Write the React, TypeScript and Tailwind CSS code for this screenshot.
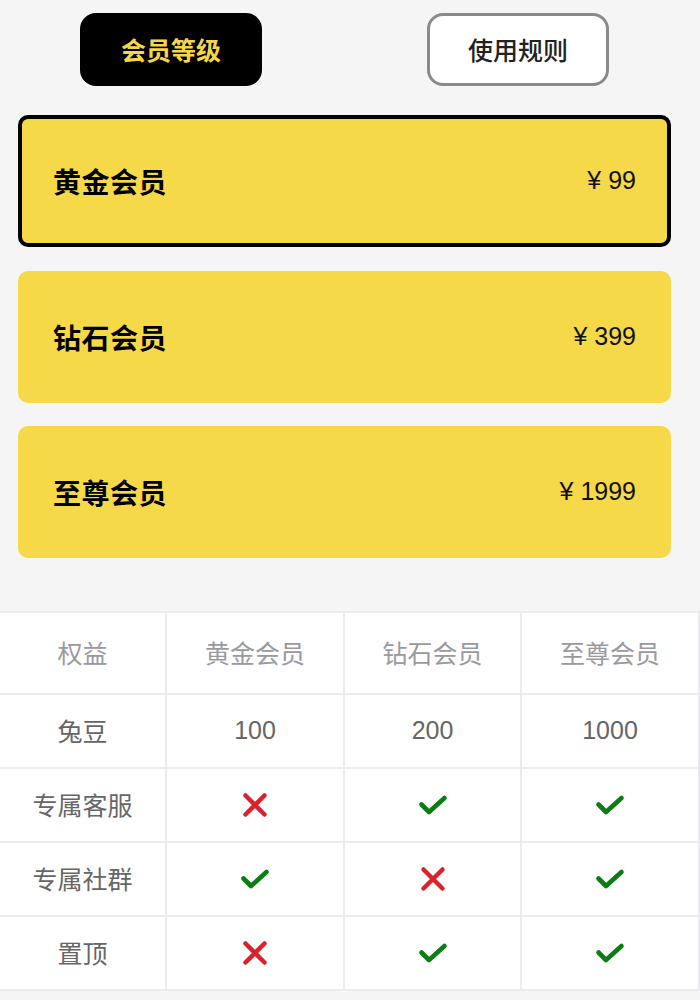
import React from "react";

const font = { fontFamily: '"Noto Sans CJK SC", "Noto Sans", sans-serif' };
const numFont = { fontFamily: '"Liberation Sans", "Noto Sans CJK SC", sans-serif' };

function Cross() {
  return (
    <svg width="26" height="26" viewBox="0 0 26 26">
      <path d="M3.5 3.5 L22.5 22.5 M22.5 3.5 L3.5 22.5" stroke="#d9232b" strokeWidth="4.5" strokeLinecap="round" fill="none" />
    </svg>
  );
}

function Check() {
  return (
    <svg width="30" height="24" viewBox="0 0 30 24">
      <path d="M3.5 11.5 L11 19 L26.5 5" stroke="#0b7d12" strokeWidth="4.6" strokeLinecap="round" strokeLinejoin="round" fill="none" />
    </svg>
  );
}

type Cell = string | boolean;

const rows: { name: string; vals: Cell[] }[] = [
  { name: "兔豆", vals: ["100", "200", "1000"] },
  { name: "专属客服", vals: [false, true, true] },
  { name: "专属社群", vals: [true, false, true] },
  { name: "置顶", vals: [false, true, true] },
];

const cards = [
  { name: "黄金会员", price: "99", active: true, gap: "" },
  { name: "钻石会员", price: "399", active: false, gap: "mt-[24px]" },
  { name: "至尊会员", price: "1999", active: false, gap: "mt-[23px]" },
];

export default function App() {
  return (
    <div className="w-[700px] h-[1000px] bg-[#f5f5f5] overflow-hidden" style={font}>
      <div className="flex pt-[13px] pl-[80px] gap-[165px]">
        <div className="w-[182px] h-[73px] rounded-[16px] bg-black flex items-center justify-center text-[25px] font-bold text-[#f5d54a]">
          会员等级
        </div>
        <div className="w-[182px] h-[73px] rounded-[16px] bg-white border-[3px] border-[#8a8a8a] flex items-center justify-center text-[25px] font-medium text-[#222]">
          使用规则
        </div>
      </div>

      <div className="mt-[29px] ml-[18px] w-[653px] flex flex-col">
        {cards.map((c) => (
          <div
            key={c.name}
            className={
              c.active
                ? "h-[132px] rounded-[10px] bg-[#f6d948] border-[4px] border-black flex items-center justify-between pl-[31px] pr-[31px]"
                : c.gap === "mt-[24px]"
                ? "mt-[24px] h-[132px] rounded-[10px] bg-[#f6d948] flex items-center justify-between pl-[35px] pr-[35px]"
                : "mt-[23px] h-[132px] rounded-[10px] bg-[#f6d948] flex items-center justify-between pl-[35px] pr-[35px]"
            }
          >
            <span className="text-[28px] font-bold text-black tracking-[0.5px]">{c.name}</span>
            <span className="text-[25px] text-[#111] flex items-center" style={numFont}>
              <span className="mr-[7px]">¥</span>
              {c.price}
            </span>
          </div>
        ))}
      </div>

      <div className="mt-[53px] bg-white border-t-2 border-[#ebebf0] grid grid-cols-[167px_178px_177px_178px]">
        {["权益", "黄金会员", "钻石会员", "至尊会员"].map((h) => (
          <div
            key={h}
            className="h-[82px] flex items-center justify-center text-[25px] text-[#9a9a9e] border-r-2 border-b-2 border-[#ebebf0]"
          >
            {h}
          </div>
        ))}
        {rows.map((r) => (
          <React.Fragment key={r.name}>
            <div className="h-[74px] flex items-center justify-center text-[25px] text-[#666] border-r-2 border-b-2 border-[#ebebf0]">
              {r.name}
            </div>
            {r.vals.map((v, i) => (
              <div
                key={i}
                className="h-[74px] flex items-center justify-center text-[25px] text-[#666] border-r-2 border-b-2 border-[#ebebf0]"
                style={typeof v === "string" ? numFont : undefined}
              >
                {typeof v === "string" ? v : v ? <Check /> : <Cross />}
              </div>
            ))}
          </React.Fragment>
        ))}
      </div>
    </div>
  );
}
